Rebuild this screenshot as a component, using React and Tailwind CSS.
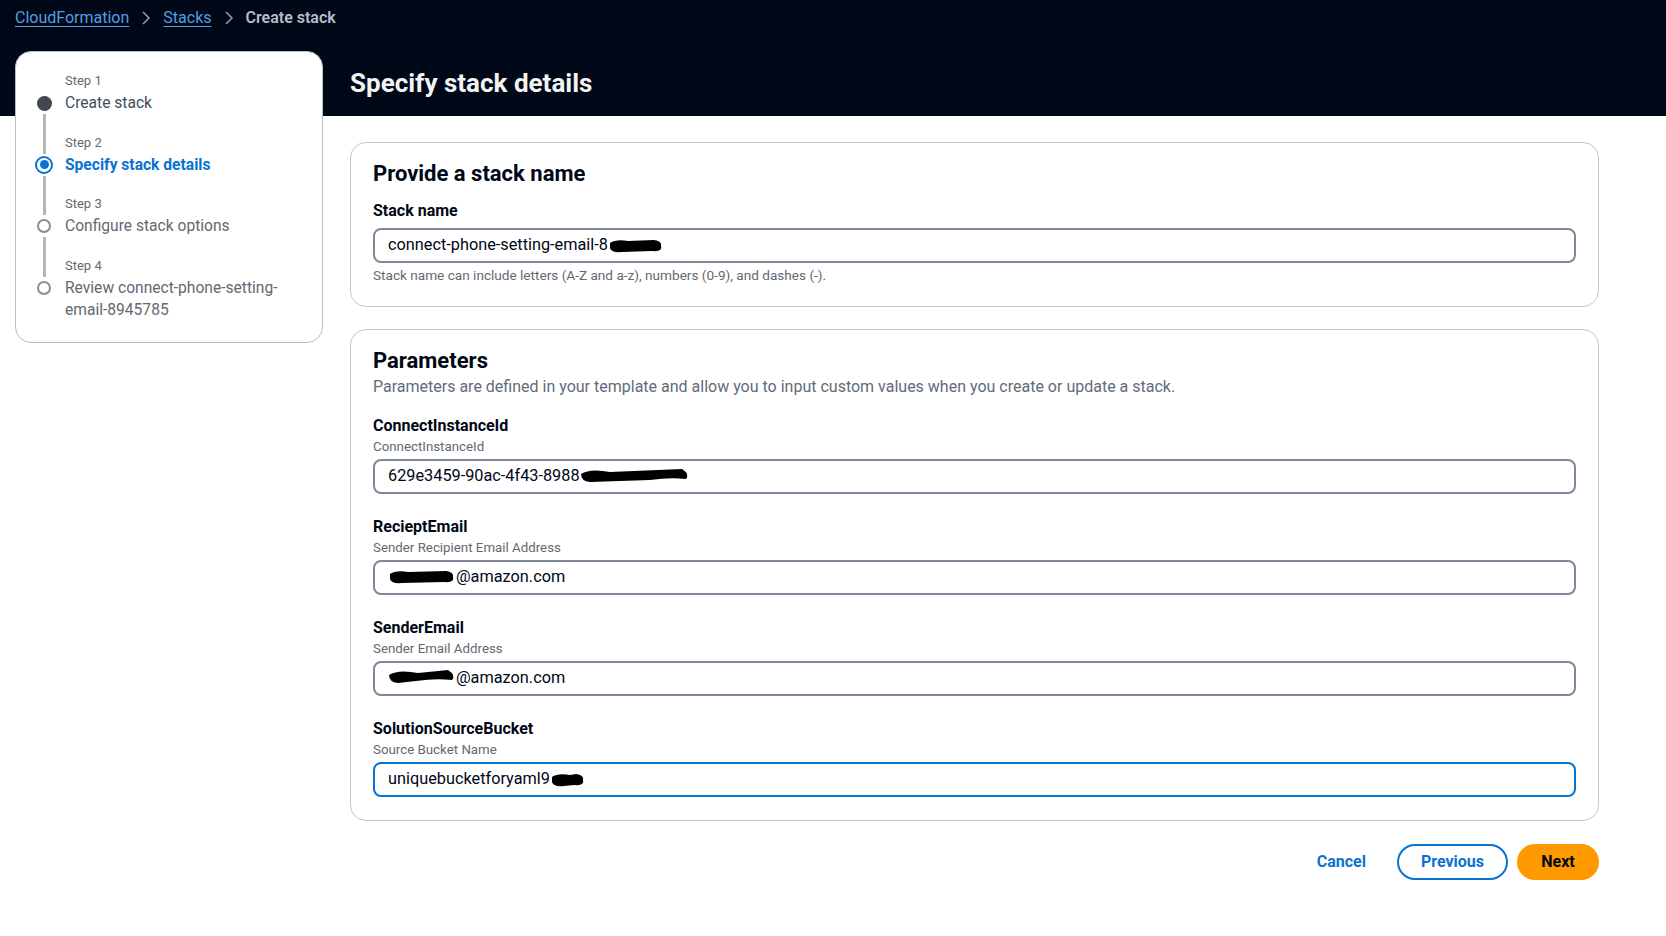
// Create stack wizard – step 2 (Specify stack details)

const FONT = 'font-["Roboto","Liberation_Sans",sans-serif]'

// ─── Redaction scribble ──────────────────────────────────────────────────────
function Tachado({ width = 60, height = 16, variante = 0 }) {
  const paths = [
    `M2 5 Q8 1 20 3 L${width - 10} 2 Q${width - 2} 3 ${width - 3} 8 Q${width - 1} 14 ${width - 12} 13 L14 14 Q3 15 2 10 Z`,
    `M1 6 Q10 0 30 4 L${width - 8} 1 Q${width} 6 ${width - 4} 11 Q${width - 20} 9 ${width - 40} 12 L10 14 Q1 13 1 6 Z`,
  ]
  return (
    <svg width={width} height={height} viewBox={`0 0 ${width} ${height}`} className="inline-block align-middle">
      <path d={paths[variante]} fill="#000" />
    </svg>
  )
}

function Chevron() {
  return (
    <svg width="12" height="16" viewBox="0 0 12 16" className="mx-[11px]">
      <path d="M3 2 L9 8 L3 14" fill="none" stroke="#8d99a8" strokeWidth="1.6" />
    </svg>
  )
}

// ─── Steps (sidebar) ─────────────────────────────────────────────────────────
const PASOS = [
  { n: 1, titulo: 'Create stack', estado: 'hecho' },
  { n: 2, titulo: 'Specify stack details', estado: 'actual' },
  { n: 3, titulo: 'Configure stack options', estado: 'pendiente' },
  { n: 4, titulo: 'Review connect-phone-setting-email-8945785', estado: 'pendiente' },
]

function Circulo({ estado }) {
  if (estado === 'hecho')
    return <div className="w-[15px] h-[15px] rounded-full bg-[#424650]" />
  if (estado === 'actual')
    return (
      <div className="w-[18px] h-[18px] rounded-full border-[2.5px] border-[#0972d3] flex items-center justify-center">
        <div className="w-[9px] h-[9px] rounded-full bg-[#0972d3]" />
      </div>
    )
  return <div className="w-[14px] h-[14px] rounded-full border-2 border-[#8c8c94]" />
}

function Paso({ paso, primero, ultimo }) {
  return (
    <div className="flex">
      <div className="w-[26px] flex flex-col items-center">
        <div className={`w-[3px] h-[22px] ${primero ? '' : 'bg-[#b4b4bb]'}`} />
        <div className="h-[22px] flex items-center">
          <Circulo estado={paso.estado} />
        </div>
        <div className={`w-[3px] flex-1 ${ultimo ? '' : 'bg-[#b4b4bb]'}`} />
      </div>
      <div className={`ml-[8px] flex-1 ${ultimo ? '' : 'pb-[17.5px]'}`}>
        <div className="text-[13px] leading-[22px] text-[#656871]">Step {paso.n}</div>
        <div
          className={`text-[15.6px] leading-[22px] ${
            paso.estado === 'actual'
              ? 'font-bold text-[#0972d3]'
              : paso.estado === 'hecho'
              ? 'text-[#414d5c]'
              : 'text-[#656871]'
          }`}
        >
          {paso.n === 4 ? (
            <>Review connect-phone-setting-<br />email-8945785</>
          ) : (
            paso.titulo
          )}
        </div>
      </div>
    </div>
  )
}

// ─── Field ───────────────────────────────────────────────────────────────────
function Campo({ label, sub, children, foco }) {
  return (
    <div>
      <div className="text-[16px] leading-[22px] font-bold text-[#000716]">{label}</div>
      {sub && <div className="text-[13.3px] leading-[19px] text-[#656871]">{sub}</div>}
      <div
        className={`${sub ? 'mt-[3px]' : 'mt-[6px]'} h-[35px] rounded-[8px] border-2 ${
          foco ? 'border-[#0972d3]' : 'border-[#7d8998]'
        } bg-white flex items-center pl-[13px] text-[16.3px] text-[#000716]`}
      >
        {children}
      </div>
    </div>
  )
}

export default function App() {
  return (
    <div
      className={`min-h-screen w-full bg-[linear-gradient(to_bottom,#000716_116px,#ffffff_116px)] ${FONT}`}
    >
      {/* Breadcrumb */}
      <div className="h-[36px] pl-[15px] flex items-center text-[16px]">
        <span className="text-[#539fe5] underline underline-offset-[3px]">CloudFormation</span>
        <Chevron />
        <span className="text-[#539fe5] underline underline-offset-[3px]">Stacks</span>
        <Chevron />
        <span className="text-[#b6bec9] font-semibold">Create stack</span>
      </div>

      <div className="flex pt-[15px]">
        {/* Sidebar */}
        <aside className="ml-[15px] w-[308px] h-[292px] shrink-0 bg-white border border-[#b6bec9] rounded-[16px] pl-[15px] pt-[18px]">
          {PASOS.map((p, i) => (
            <Paso key={p.n} paso={p} primero={i === 0} ultimo={i === PASOS.length - 1} />
          ))}
        </aside>

        {/* Main */}
        <main className="ml-[27px] w-[1249px]">
          <div className="h-[65px] flex items-center">
            <h1 className="text-[26px] font-bold text-[#f2f3f3]">Specify stack details</h1>
          </div>

          {/* Card: stack name */}
          <section className="mt-[26px] border border-[#c6c6cd] rounded-[16px] px-[22px] pt-[16px] pb-[22px]">
            <h2 className="text-[22px] leading-[30px] font-bold text-[#000716]">Provide a stack name</h2>
            <div className="mt-[11px]">
              <Campo label="Stack name">
                connect-phone-setting-email-8
                <Tachado width={56} height={16} />
              </Campo>
            </div>
            <p className="mt-[3px] text-[13.6px] leading-[18px] text-[#656871]">
              Stack name can include letters (A-Z and a-z), numbers (0-9), and dashes (-).
            </p>
          </section>

          {/* Card: parameters */}
          <section className="mt-[22px] border border-[#c6c6cd] rounded-[16px] px-[22px] pt-[17px] pb-[23px]">
            <h2 className="text-[22px] leading-[28px] font-bold text-[#000716]">Parameters</h2>
            <p className="mt-[1px] text-[16px] leading-[22px] text-[#5f6b7a]">
              Parameters are defined in your template and allow you to input custom values when you
              create or update a stack.
            </p>

            <div className="mt-[17px] flex flex-col gap-[22px]">
              <Campo label="ConnectInstanceId" sub="ConnectInstanceId">
                629e3459-90ac-4f43-8988
                <Tachado width={110} height={18} variante={1} />
              </Campo>
              <Campo label="RecieptEmail" sub="Sender Recipient Email Address">
                <Tachado width={68} height={18} />
                @amazon.com
              </Campo>
              <Campo label="SenderEmail" sub="Sender Email Address">
                <Tachado width={68} height={20} variante={1} />
                @amazon.com
              </Campo>
              <Campo label="SolutionSourceBucket" sub="Source Bucket Name" foco>
                uniquebucketforyaml9
                <Tachado width={36} height={16} />
              </Campo>
            </div>
          </section>

          {/* Actions */}
          <div className="mt-[23px] flex justify-end items-center gap-[9px]">
            <button className="h-[36px] px-[22px] text-[16px] font-bold text-[#0972d3]">Cancel</button>
            <button className="h-[36px] w-[111px] rounded-full border-2 border-[#0972d3] text-[16px] font-bold text-[#0972d3]">
              Previous
            </button>
            <button className="h-[36px] w-[82px] rounded-full bg-[#ff9900] text-[16px] font-bold text-[#000716]">
              Next
            </button>
          </div>
        </main>
      </div>
    </div>
  )
}
